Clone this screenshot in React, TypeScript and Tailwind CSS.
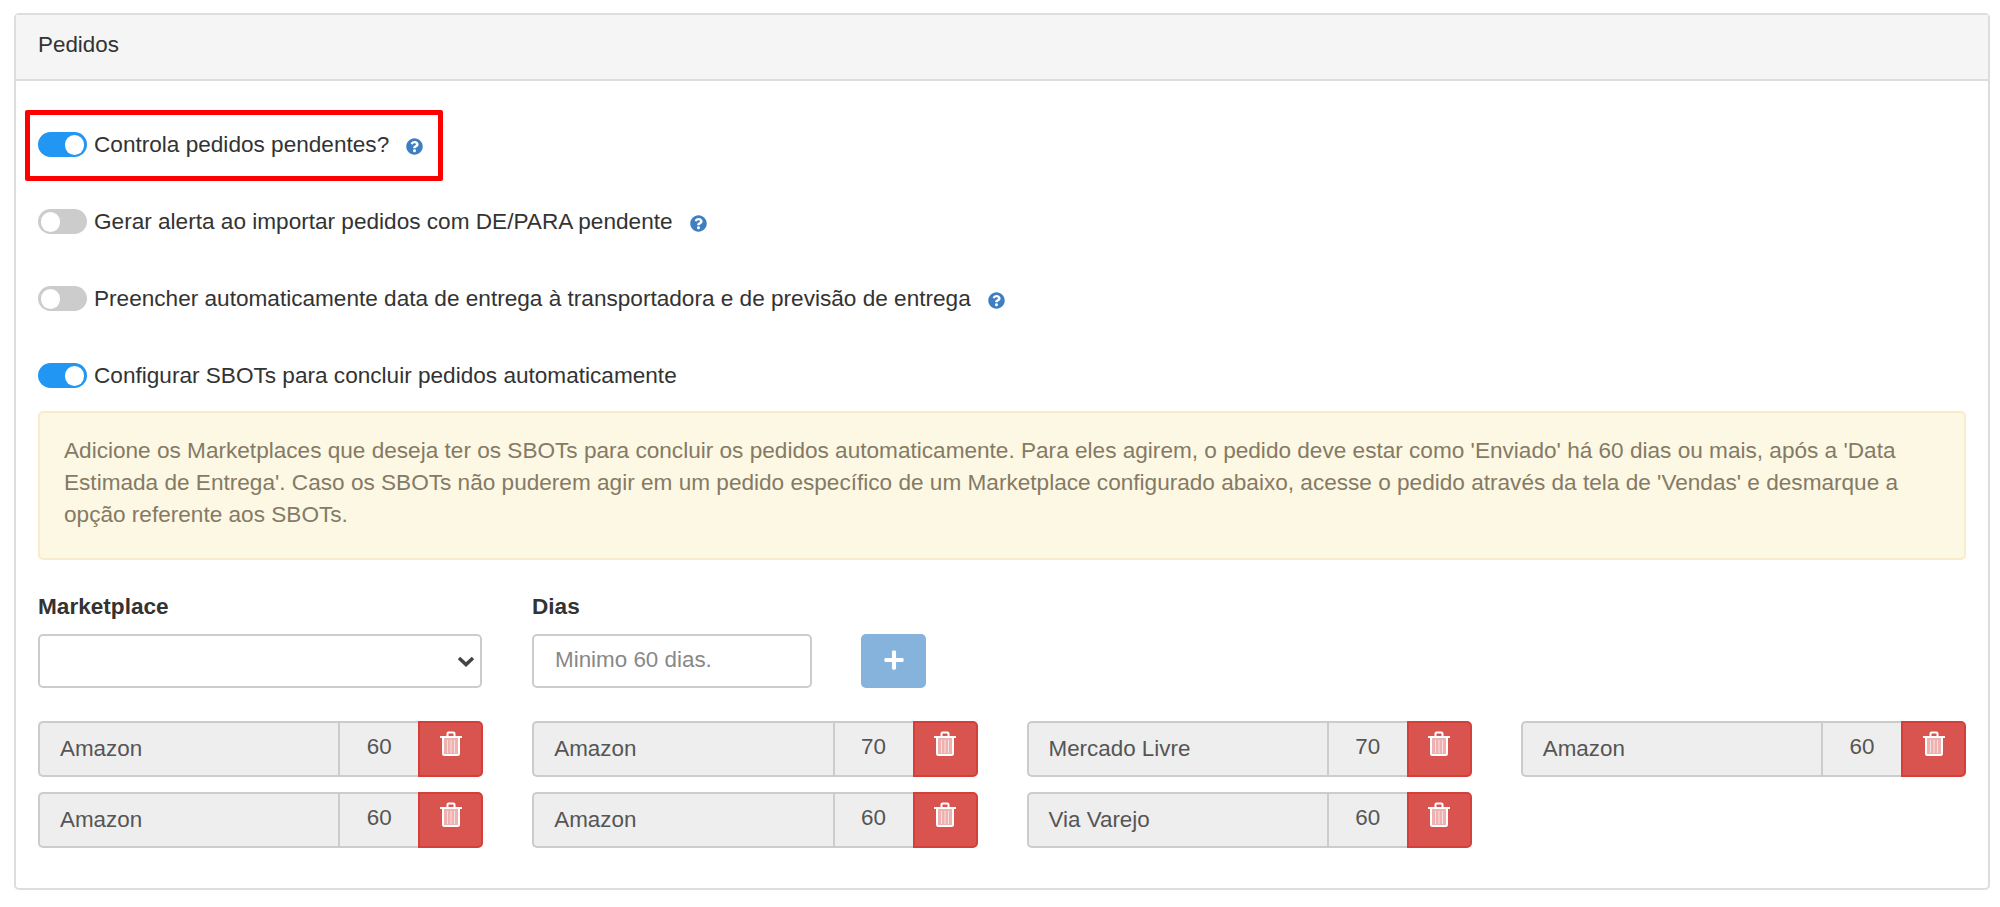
import { FaPlus, FaQuestionCircle } from 'react-icons/fa'

const font = "font-['Liberation_Sans',Arial,sans-serif]"

const items = [
  { name: 'Amazon', days: 60 },
  { name: 'Amazon', days: 70 },
  { name: 'Mercado Livre', days: 70 },
  { name: 'Amazon', days: 60 },
  { name: 'Amazon', days: 60 },
  { name: 'Amazon', days: 60 },
  { name: 'Via Varejo', days: 60 },
]

function TrashIcon() {
  return (
    <svg width="22" height="25" viewBox="0 0 22 25" fill="none">
      <path d="M0 6h22" stroke="white" strokeWidth="2" />
      <path d="M7.500 5V2.500a1 1 0 0 1 1-1h5a1 1 0 0 1 1 1V5" stroke="white" strokeWidth="2" />
      <path d="M3 7h16v15.500a1.500 1.500 0 0 1-1.500 1.500h-11A1.500 1.500 0 0 1 3 22.500z" fill="white" fillOpacity="0.55" />
      <path d="M3 7v15.500A1.500 1.500 0 0 0 4.500 24h13a1.500 1.500 0 0 0 1.500-1.500V7" stroke="white" strokeWidth="2" />
      <path d="M7.500 9v13M11 9v13M14.500 9v13" stroke="white" strokeOpacity="0.6" strokeWidth="1" />
    </svg>
  )
}

function Toggle({ on }: { on: boolean }) {
  return (
    <span
      className={`flex h-[25px] w-[49px] shrink-0 items-center rounded-full px-[3px] ${
        on ? 'justify-end bg-[#2196f3]' : 'justify-start bg-[#cccccc]'
      }`}
    >
      <span className="h-[20px] w-[19px] rounded-full bg-white" />
    </span>
  )
}

function OptionRow({ on, label, help }: { on: boolean; label: string; help?: boolean }) {
  return (
    <div className="flex h-[25px] items-center">
      <Toggle on={on} />
      <span className="ml-[7px] text-[22.6px] text-[#333333]">{label}</span>
      {help && <FaQuestionCircle className="ml-[17px] mt-[4px] text-[17px] text-[#3f7fc1]" />}
    </div>
  )
}

function ItemRow({ name, days }: { name: string; days: number }) {
  return (
    <div className="flex h-[56px] text-[22.4px] text-[#555555]">
      <div className="flex min-w-0 flex-1 items-center rounded-l-[5px] border-2 border-r-0 border-[#cccccc] bg-[#eeeeee] pl-[20px]">
        {name}
      </div>
      <div className="flex w-[80px] items-center justify-center border-y-2 border-l-2 border-[#cccccc] bg-[#eeeeee] pb-[5px]">
        {days}
      </div>
      <button className="flex w-[65px] items-start justify-center rounded-r-[5px] border-2 border-[#d43f3a] bg-[#d9534f] pt-[8px]">
        <TrashIcon />
      </button>
    </div>
  )
}

export default function App() {
  return (
    <div className={`min-h-[907px] bg-white pl-[14px] pt-[13px] ${font}`}>
      <div className="w-[1976px] rounded-[5px] border-2 border-[#dddddd] bg-white">
        <div className="flex h-[66px] items-center border-b-2 border-[#dddddd] bg-[#f5f5f5] px-[22px] pb-[4px] text-[22.4px] text-[#333333]">
          Pedidos
        </div>
        <div className="px-[22px] pb-[40px] pt-[51px]">
          <div className="relative flex flex-col gap-[52px]">
            <OptionRow on label="Controla pedidos pendentes?" help />
            <OptionRow on={false} label="Gerar alerta ao importar pedidos com DE/PARA pendente" help />
            <OptionRow
              on={false}
              label="Preencher automaticamente data de entrega à transportadora e de previsão de entrega"
              help
            />
            <OptionRow on label="Configurar SBOTs para concluir pedidos automaticamente" />
            {/* marcação vermelha por cima da primeira opção */}
            <div className="absolute left-[-13px] top-[-22px] h-[71px] w-[418px] rounded-[2px] border-[5px] border-[#ff0000]" />
          </div>

          <div className="mt-[23px] h-[149px] rounded-[5px] border-2 border-[#faebcc] bg-[#fcf8e3] px-[24px] pt-[22px] text-[22.6px] leading-[32px] text-[#857a66]">
            Adicione os Marketplaces que deseja ter os SBOTs para concluir os pedidos automaticamente. Para eles
            agirem, o pedido deve estar como 'Enviado' há 60 dias ou mais, após a 'Data Estimada de Entrega'. Caso os
            SBOTs não puderem agir em um pedido específico de um Marketplace configurado abaixo, acesse o pedido
            através da tela de 'Vendas' e desmarque a opção referente aos SBOTs.
          </div>

          <div className="mt-[32px] flex items-end">
            <div className="w-[444px]">
              <label className="block text-[22.6px] font-bold leading-[30px] text-[#333333]">Marketplace</label>
              <div className="relative mt-[12px]">
                <select className="block h-[54px] w-full appearance-none rounded-[5px] border-2 border-[#cccccc] bg-white text-[22.4px] text-[#555555]" />
                <svg
                  className="pointer-events-none absolute right-[7px] top-[22px]"
                  width="18"
                  height="11"
                  viewBox="0 0 18 11"
                  fill="none"
                >
                  <path d="M2 2l7 6.500L16 2" stroke="#444444" strokeWidth="3.500" />
                </svg>
              </div>
            </div>
            <div className="ml-[50px] w-[280px]">
              <label className="block text-[22.6px] font-bold leading-[30px] text-[#333333]">Dias</label>
              <input
                placeholder="Minimo 60 dias."
                className="mt-[12px] block h-[54px] w-full rounded-[5px] border-2 border-[#cccccc] bg-white px-[21px] pb-[3px] text-[22.4px] text-[#555555] placeholder:text-[#888888]"
              />
            </div>
            <button className="ml-[49px] flex h-[54px] w-[65px] items-center justify-center rounded-[5px] bg-[#85b3dc] pb-[3px] text-[22px] text-white">
              <FaPlus />
            </button>
          </div>

          <div className="mt-[33px] grid grid-cols-4 gap-x-[49px] gap-y-[15px]">
            {items.map((item, i) => (
              <ItemRow key={i} name={item.name} days={item.days} />
            ))}
          </div>
        </div>
      </div>
    </div>
  )
}
